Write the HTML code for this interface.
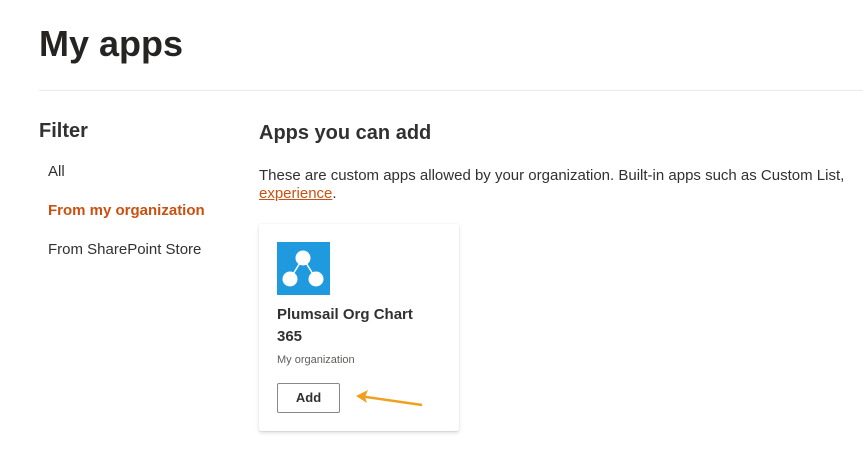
<!DOCTYPE html>
<html><head><style>
body{margin:0;width:863px;height:455px;background:#fff;font-family:"Liberation Sans",Arial,sans-serif;color:#323130;position:relative;overflow:hidden}
.a{position:absolute;white-space:nowrap}
</style></head><body>
<div class="a" style="left:39px;top:23px;font-size:36px;font-weight:bold;color:#252423">My apps</div>
<div class="a" style="left:39px;top:90px;width:824px;height:1px;background:#edebe9"></div>
<div class="a" style="left:39px;top:120px;font-size:20px;font-weight:bold">Filter</div>
<div class="a" style="left:48px;top:163px;font-size:15px">All</div>
<div class="a" style="left:48px;top:202px;font-size:15px;font-weight:bold;color:#ca5010">From my organization</div>
<div class="a" style="left:48px;top:241px;font-size:15px">From SharePoint Store</div>
<div class="a" style="left:259px;top:122px;font-size:20px;font-weight:bold">Apps you can add</div>
<div class="a" style="left:259px;top:167px;font-size:15px">These are custom apps allowed by your organization. Built-in apps such as Custom List,</div>
<div class="a" style="left:259px;top:185px;font-size:15px"><span style="color:#ca5010;text-decoration:underline">experience</span>.</div>
<div class="a" style="left:259px;top:224px;width:200px;height:207px;background:#fff;border-radius:2px;box-shadow:0 1.6px 3.6px rgba(0,0,0,.13),0 .3px .9px rgba(0,0,0,.11)"></div>
<svg class="a" style="left:277px;top:242px" width="53" height="53"><rect width="53" height="53" fill="#1f9ade"/><path d="M26 16L13 37M26 16L39 37" stroke="#fff" stroke-width="1.5"/><circle cx="26" cy="16" r="7.5" fill="#fff"/><circle cx="13" cy="37" r="7.5" fill="#fff"/><circle cx="39" cy="37" r="7.5" fill="#fff"/></svg>
<div class="a" style="left:277px;top:304px;font-size:15px;font-weight:bold;line-height:22px">Plumsail Org Chart<br>365</div>
<div class="a" style="left:277px;top:354px;font-size:11px;color:#605e5c">My organization</div>
<div class="a" style="left:277px;top:383px;width:61px;height:28px;border:1px solid #8a8886;border-radius:2px;font-size:13px;font-weight:bold;text-align:center;line-height:28px">Add</div>
<svg class="a" style="left:350px;top:388px" width="80" height="25"><path d="M72 17L9 8" stroke="#f0a01e" stroke-width="2.5" fill="none"/><path d="M6 8L18 2L15 9L17 15Z" fill="#f0a01e"/></svg>
</body></html>
